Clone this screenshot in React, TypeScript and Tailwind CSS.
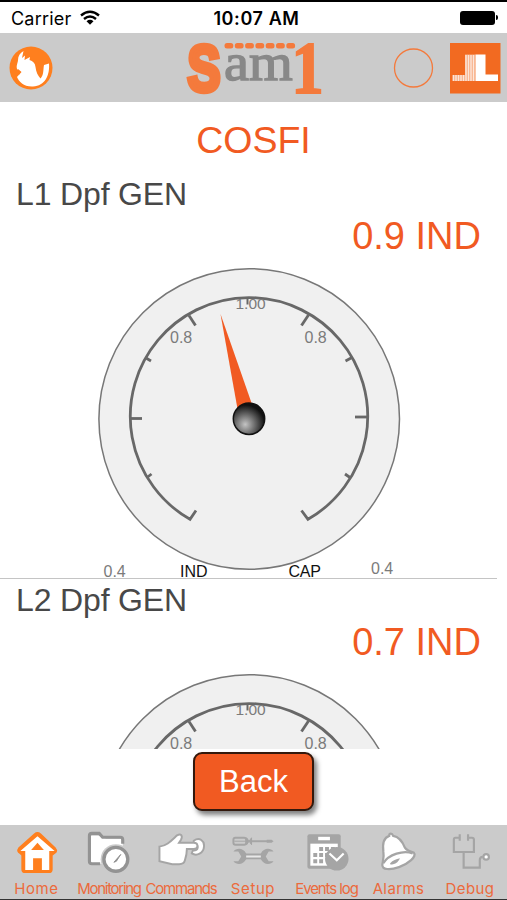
import React from 'react';

const TICKS = [
  [189, 315.5, 195.5, 325.5],
  [308.5, 315, 301.5, 325.5],
  [146, 358, 151, 361],
  [352, 357.5, 345.5, 361],
  [131, 418.5, 142, 418.5],
  [355, 417, 368, 417],
  [147, 477.5, 151.5, 474],
  [350, 477.5, 345, 474],
];

interface GaugeProps {
  needle: number;
}

const Gauge: React.FC<GaugeProps> = ({ needle }) => (
  <svg className="block h-[330px] w-[507px] shrink-0" viewBox="0 256 507 330" fontFamily="'Liberation Sans', sans-serif">
    <defs>
      <radialGradient id="hub" cx="0.38" cy="0.68" r="0.62">
        <stop offset="0" stopColor="#c4c4c4" />
        <stop offset="0.5" stopColor="#6a6a6a" />
        <stop offset="1" stopColor="#111" />
      </radialGradient>
    </defs>
    <circle cx="249.2" cy="419" r="150.3" fill="#f0f0f0" stroke="#777" strokeWidth="1.5" />
    <g fill="none" stroke="#686868" strokeWidth="2.8">
      <path d="M196 510.5L190 519.3A118.7 118.7 0 1 1 308 519.3L301.5 510.5" />
      {TICKS.map(([x1, y1, x2, y2], i) => <line key={i} x1={x1} y1={y1} x2={x2} y2={y2} />)}
      <path d="M247.5 299V304.5" strokeWidth="2" />
    </g>
    <g fontSize="16" fill="#7b7b7b">
      <text x="235.5" y="308.5" fontSize="15.5">1.00</text>
      <text x="170" y="343">0.8</text>
      <text x="304.5" y="343">0.8</text>
      <text x="103.5" y="577">0.4</text>
      <text x="371" y="574">0.4</text>
    </g>
    <g fontSize="16" fill="#111">
      <text x="180" y="577" textLength="27.5">IND</text>
      <text x="288.5" y="577" textLength="32.5">CAP</text>
    </g>
    <path d="M220.5 314L239.5 420H257.5Z" fill="#f15a22" transform={`rotate(${needle} 249 418.5)`} />
    <circle cx="249" cy="418.8" r="15.7" fill="url(#hub)" stroke="#111" strokeWidth="1.5" />
  </svg>
);

interface PhaseProps {
  name: string;
  value: string;
  needle: number;
}

const Phase: React.FC<PhaseProps> = ({ name, value, needle }) => (
  <section className="h-[406px] shrink-0 overflow-hidden">
    <h2 className="h-[40px] pl-4 text-[32px] leading-[43px] tracking-[-0.15px] text-[#484848]">{name}</h2>
    <div className="h-[43px] pr-[26px] text-right text-[38px] leading-[47px] text-[#f15a22]">{value}</div>
    <div className="mr-[10px] h-[323px] border-b border-[#c4c4c4]">
      <Gauge needle={needle} />
    </div>
  </section>
);

const HomeIcon = () => (
  <svg className="block size-12" viewBox="0 0 48 48">
    <path d="M21 5.5Q24.5 2.5 28 5.5L43 20Q46.5 24.5 42 26.500L40 28V42Q40 46 36 46H12Q8 46 8 42V28L6.5 26.5Q2 24.5 5 20Z" fill="#ff7f1e" />
    <path d="M24.5 8.5L7 23.5H12V43H20V31H29V43H36.5V23.5H42Z" fill="#fff" />
    <path d="M24.5 15L31 22.5H18Z" fill="#ff7f1e" />
  </svg>
);

const MonitoringIcon = () => (
  <svg className="block size-12" viewBox="0 0 48 48" fill="none" stroke="#939393">
    <path d="M17 36.5H4V8H17L21 11H38V36.5H17Z" fill="#fff" stroke="none" />
    <path d="M15 36.5H6.5Q4 36.5 4 34V8Q4 5.5 6.5 5.5H14L17.5 9.5H35.5Q38 9.5 38 12V16" strokeWidth="3.2" />
    <circle cx="31" cy="32" r="15.5" fill="#cbcbcb" stroke="none" />
    <circle cx="31" cy="32" r="12.2" fill="#fff" strokeWidth="3.4" />
    <path d="M29 35L36 27L31.5 34Z" fill="#777" strokeWidth="1" />
  </svg>
);

const CommandsIcon = () => (
  <svg className="block size-12" viewBox="0 0 48 48" fill="#fff" stroke="#a5a5a5" strokeWidth="2">
    <path d="M37 13C43 9 48 13 47.5 19C47 26 40 29 35 26L36 23C42 24 43 17 37 16Z" />
    <path d="M2 19C10 18 14 13 20 7.5C24 5 26 8 24 12L22 15H37C42 15 42 21.5 37 21.500H30C30 27 29 30 28 33Q27 37 22 37H15L2 34Z" />
  </svg>
);

const SetupIcon = () => (
  <svg className="block size-12" viewBox="0 0 48 48" fill="none" stroke="#a5a5a5">
    <rect x="4" y="10" width="13" height="7" rx="2" strokeWidth="2" />
    <path d="M5 13.5H17" strokeWidth="1" />
    <path d="M17.5 10L22.5 17V10L17.5 17Z" fill="#a5a5a5" strokeWidth="1" />
    <path d="M22.5 13.5H40" strokeWidth="2" />
    <path d="M38 12H43L45 13.5L43 15H38Z" fill="#a5a5a5" stroke="none" />
    <path d="M15 27H35V31H15Z" fill="#e8e8e8" strokeWidth="2" />
    <path d="M4 24C7 20 14 20 17 26V32C14 38 7 38 4 34H9L12 29L9 24ZM45 24C42 20 35 20 32 26V32C35 38 42 38 45 34H40L37 29L40 24Z" fill="#a5a5a5" stroke="none" />
  </svg>
);

const EventsIcon = () => (
  <svg className="block size-12" viewBox="0 0 48 48" fill="#a5a5a5">
    <rect x="4" y="6.5" width="34" height="35" rx="2" />
    <rect x="15" y="9" width="12" height="3.5" fill="#fff" />
    <rect x="7" y="16" width="28" height="22.5" fill="#fff" />
    <path d="M16 19.5h4v4h-4zM22 19.5h4v4h-4zM28 19.5h4v4h-4zM10 25.5h4v4h-4zM16 25.5h4v4h-4zM22 25.5h4v4h-4zM10 32h4v4h-4zM16 32h4v4h-4z" />
    <circle cx="34" cy="31.5" r="12" />
    <path d="M26.5 26L34 33L41 26" fill="none" stroke="#fff" strokeWidth="2.2" />
  </svg>
);

const AlarmsIcon = () => (
  <svg className="block size-12" viewBox="0 0 48 48" fill="#fff" stroke="#a5a5a5" strokeWidth="2.3">
    <path d="M7 37C8 32 9 29 8 24C7 16 8 10 14 8C14 5 17 5 18 8C24 9 28 15 30 20C32 23 35 24 39 25C43 29 33 37 24 40C15 43 6 43 7 37Z" />
    <path d="M8 36C13 27 29 22 38 26" fill="none" />
    <path d="M15 36Q19 32 25 31Q23 36 18 37Q14 38 15 36Z" fill="#a5a5a5" stroke="none" />
  </svg>
);

const DebugIcon = () => (
  <svg className="block size-12" viewBox="0 0 48 48" fill="none" stroke="#a5a5a5" strokeWidth="2.2">
    <path d="M13 10H9Q7.5 10 7.5 12V24.5H28V12Q28 10 26 10H22M13.5 6.5V13M22 6.5V13M17.5 25V40.5H34V33Q34 29.5 37 29.5" />
    <circle cx="40.5" cy="29.5" r="2.8" fill="#fff" />
  </svg>
);

const TABS = [
  { label: 'Home', icon: <HomeIcon />, place: 'w-[73px]', text: 'tracking-[0.6px]' },
  { label: 'Monitoring', icon: <MonitoringIcon />, place: 'w-[72px]', text: 'tracking-[-1.3px]' },
  { label: 'Commands', icon: <CommandsIcon />, place: 'w-[72px]', text: 'tracking-[-1.2px]' },
  { label: 'Setup', icon: <SetupIcon />, place: 'w-[72px]', text: 'tracking-[0.6px]' },
  { label: 'Events log', icon: <EventsIcon />, place: 'w-[75px]', text: 'tracking-[-1.1px]' },
  { label: 'Alarms', icon: <AlarmsIcon />, place: 'w-[69px]', text: 'tracking-[0.4px]' },
  { label: 'Debug', icon: <DebugIcon />, place: 'w-[74px]', text: 'tracking-[0.4px]' },
];

const StatusBar = () => (
  <div className="grid h-[33px] shrink-0 grid-cols-3 items-center border-t-2 border-black bg-white pr-[9px] pl-[11px] font-['Inter',sans-serif] text-black">
    <div className="flex items-center gap-[9px] pt-px text-[18px] tracking-[0.2px]">
      Carrier
      <svg className="mb-[2px] h-[15px] w-5" viewBox="0 0 20 15" fill="none" stroke="#000" strokeWidth="2.4">
        <path d="M1 5.5Q10 -2 19 5.5M4 9Q10 4 16 9" />
        <path d="M6.5 11.2Q10 8.5 13.5 11.2L10 14.8Z" fill="#000" stroke="none" />
      </svg>
    </div>
    <div className="pt-px pl-[4px] text-center text-[18px] font-semibold tracking-[0.6px] whitespace-nowrap">10:07 AM</div>
    <div className="flex items-center justify-end gap-px">
      <div className="h-[14px] w-[35px] rounded-[3px] bg-black" />
      <div className="h-[5px] w-[2px] rounded-r bg-black" />
    </div>
  </div>
);

const Header = () => (
  <header className="flex h-[69px] shrink-0 items-start bg-[#cbcbcb]">
    <svg className="h-[69px] w-[507px]" viewBox="0 33 507 69">
      <circle cx="31" cy="68" r="21.5" fill="#ff7f1e" />
      <path d="M23.5 51L22 58L25 55.5L24.5 60L30 57L29.5 60C33 61 35 63 35.5 67C36 72 38 76 40.5 78.5C44 75 43 70 44 65L49 63.5C50 75 45 86 33 86.5C24 87 19 82 17 77L21 72L17 69C16 65 18 63 18 60C18 56 20 53 23.5 51Z" fill="#fff" />
      <path d="M18 69L21.5 72L18.5 75.5Z" fill="#ff7f1e" />
      <g fill="#f47a3c">
        {[224.5, 234.8, 245.1, 255.4, 265.7, 276, 286.3].map((x) => <rect key={x} x={x} y="43" width="8.8" height="5.5" rx="2.5" />)}
        <text transform="translate(187.5 90.5) scale(.76 1)" fontFamily="'Liberation Sans', sans-serif" fontWeight="bold" fontSize="65" stroke="#f47a3c" strokeWidth="5.5">S</text>
        <text transform="translate(291.5 92.5) scale(.88 1)" fontFamily="'Liberation Serif', serif" fontWeight="bold" fontSize="73" stroke="#f47a3c" strokeWidth="2">1</text>
      </g>
      <text transform="translate(224 80) scale(.97 .91)" fontFamily="'Liberation Serif', serif" fontSize="58" fill="#888" stroke="#888" strokeWidth="1.5">am</text>
      <circle cx="413.5" cy="68" r="19" fill="none" stroke="#f47a3c" strokeWidth="1.3" />
      <rect x="450" y="43" width="50.5" height="50.5" fill="#f26a21" />
      <path d="M475.5 54.5H485.5V74.5H498V81H475.5Z" fill="#fff" />
      <path d="M452.5 75H465V54.5H475.5V81H452.5Z" fill="#fff" opacity=".45" />
      <g stroke="#fff" strokeWidth="1.4" opacity=".7">
        <path d="M453.5 75V81M456 75V81M458.5 75V81M461 75V81M463.5 75V81" />
        <path d="M466 55V81M468.5 55V81M471 55V81M473.5 55V81" />
      </g>
    </svg>
  </header>
);

export default function App() {
  return (
    <div className="flex h-[900px] w-[507px] flex-col overflow-hidden bg-white font-['Liberation_Sans',sans-serif]">
      <StatusBar />
      <Header />
      <main className="flex h-[647px] shrink-0 flex-col overflow-hidden">
        <h1 className="h-[71px] shrink-0 text-center text-[37.5px] leading-[76px] text-[#f15a22]">COSFI</h1>
        <Phase name="L1 Dpf GEN" value="0.9 IND" needle={0} />
        <Phase name="L2 Dpf GEN" value="0.7 IND" needle={-30} />
      </main>
      <div className="flex h-[76px] shrink-0 justify-center pt-[3px]">
        <button className="h-[59px] w-[121px] rounded-[9px] border-2 border-[#33180c] bg-[#f15a22] text-[31px] leading-[53px] text-white shadow-[3px_4px_5px_rgba(0,0,0,0.5)]">Back</button>
      </div>
      <footer className="flex h-[75px] shrink-0 border-b border-[#333] bg-[#cbcbcb]">
        {TABS.map((tab) => (
          <div key={tab.label} className={`flex shrink-0 flex-col items-center pt-[3px] ${tab.place}`}>
            {tab.icon}
            <span className={`pt-[3px] font-['Inter',sans-serif] text-[15px] leading-[21px] whitespace-nowrap text-[#ec6a3c] ${tab.text}`}>{tab.label}</span>
          </div>
        ))}
      </footer>
    </div>
  );
}
